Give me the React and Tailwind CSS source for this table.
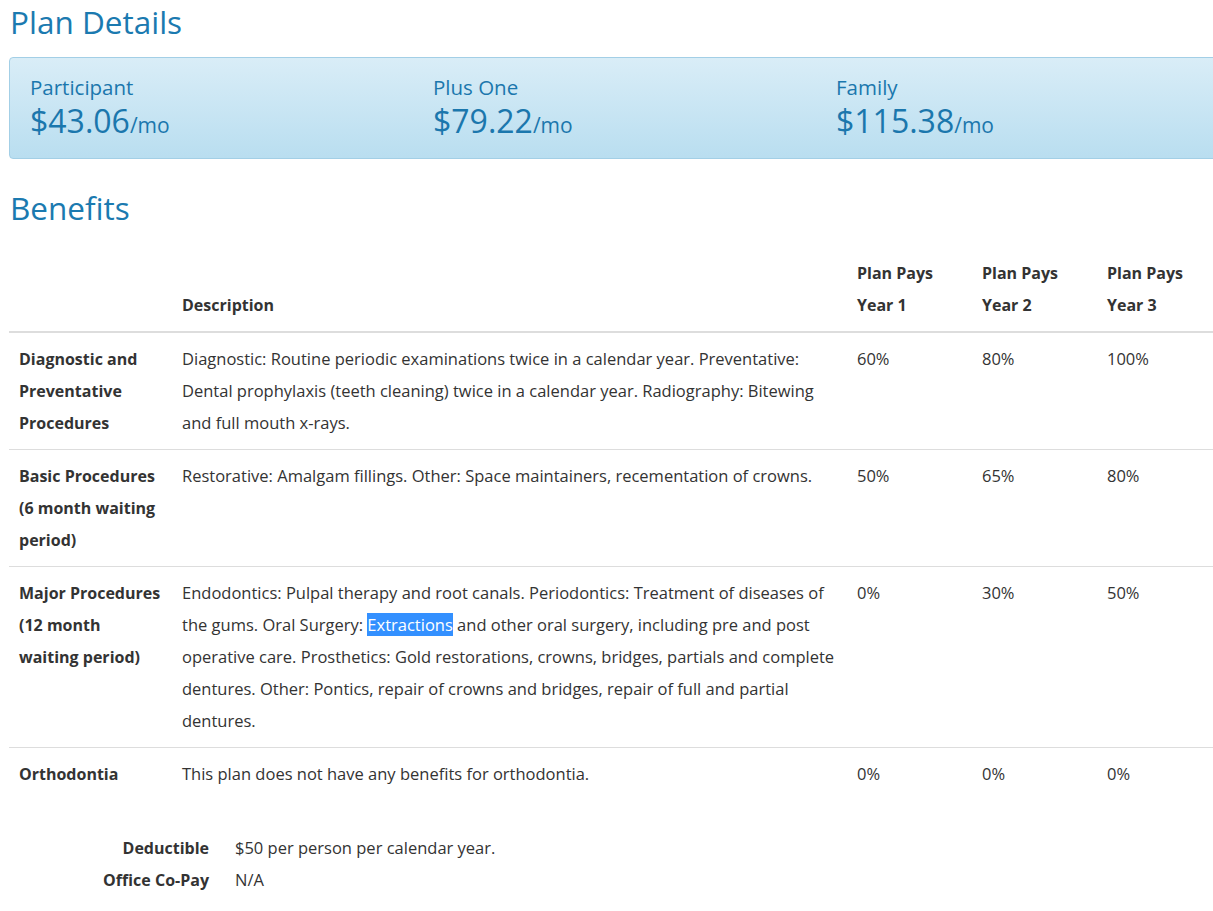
import React from 'react';

const rows = [
  {
    label: ['Diagnostic and', 'Preventative', 'Procedures'],
    desc: [
      'Diagnostic: Routine periodic examinations twice in a calendar year. Preventative:',
      'Dental prophylaxis (teeth cleaning) twice in a calendar year. Radiography: Bitewing',
      'and full mouth x-rays.',
    ],
    pays: ['60%', '80%', '100%'],
  },
  {
    label: ['Basic Procedures', '(6 month waiting', 'period)'],
    desc: ['Restorative: Amalgam fillings. Other: Space maintainers, recementation of crowns.'],
    pays: ['50%', '65%', '80%'],
  },
  {
    label: ['Major Procedures', '(12 month', 'waiting period)'],
    desc: [
      'Endodontics: Pulpal therapy and root canals. Periodontics: Treatment of diseases of',
      <>
        the gums. Oral Surgery: <span className="bg-[#3390ff] text-white">Extractions</span> and other oral surgery, including pre and post
      </>,
      'operative care. Prosthetics: Gold restorations, crowns, bridges, partials and complete',
      'dentures. Other: Pontics, repair of crowns and bridges, repair of full and partial',
      'dentures.',
    ],
    pays: ['0%', '30%', '50%'],
  },
  {
    label: ['Orthodontia'],
    desc: ['This plan does not have any benefits for orthodontia.'],
    pays: ['0%', '0%', '0%'],
  },
];

const prices = [
  { name: 'Participant', amount: '$43.06' },
  { name: 'Plus One', amount: '$79.22' },
  { name: 'Family', amount: '$115.38' },
];

function Lines({ items }) {
  return items.map((line, i) => (
    <div key={i} className="whitespace-nowrap">{line}</div>
  ));
}

export default function App() {
  return (
    <div className="w-full min-h-screen overflow-hidden bg-white text-[#333] text-[16.5px] font-['Open_Sans','Noto_Sans',sans-serif]">
      <div className="w-[1240px] pl-[9px]">
        <h1 className="mt-[5px] pl-[1px] text-[31.5px] leading-[33px] text-[#1b7ab0]">Plan Details</h1>

        <div className="mt-[19px] grid grid-cols-[403px_403px_1fr] rounded-[4px] border border-[#a3cfe6] bg-gradient-to-b from-[#d9edf7] to-[#b9def0] pt-[15px] pb-[17px] pl-[20px] text-[#1b77ad]">
          {prices.map((p) => (
            <div key={p.name}>
              <div className="text-[20.5px] leading-[28px]">{p.name}</div>
              <div className="text-[32px] leading-[40px]">
                <span>{p.amount}</span>
                <span className="text-[21px] leading-none">/mo</span>
              </div>
            </div>
          ))}
        </div>

        <h2 className="mt-[32px] pl-[1px] text-[31.5px] leading-[33px] text-[#1b7ab0]">Benefits</h2>

        <table className="mt-[23px] w-[1213px] table-fixed border-collapse leading-8">
          <colgroup>
            <col className="w-[163px]" />
            <col className="w-[675px]" />
            <col className="w-[125px]" />
            <col className="w-[125px]" />
            <col className="w-[125px]" />
          </colgroup>
          <thead>
            <tr className="border-b-2 border-[#ddd] align-bottom text-left text-[16px] font-bold">
              <th className="px-[10px] py-[10px]"></th>
              <th className="px-[10px] py-[10px]">Description</th>
              {[1, 2, 3].map((n) => (
                <th key={n} className="px-[10px] py-[10px]">
                  <div>Plan Pays</div>
                  <div>Year {n}</div>
                </th>
              ))}
            </tr>
          </thead>
          <tbody>
            {rows.map((r, i) => (
              <tr key={i} className={`align-top ${i > 0 ? 'border-t border-[#ddd]' : ''}`}>
                <td className="px-[10px] py-[10px] text-[16px] font-bold">
                  <Lines items={r.label} />
                </td>
                <td className="px-[10px] py-[10px]">
                  <Lines items={r.desc} />
                </td>
                {r.pays.map((v, j) => (
                  <td key={j} className="px-[10px] py-[10px]">{v}</td>
                ))}
              </tr>
            ))}
          </tbody>
        </table>

        <div className="mt-[32px] grid grid-cols-[200px_1fr] gap-x-[26px] leading-8">
          <div className="text-right text-[16px] font-bold">Deductible</div>
          <div>$50 per person per calendar year.</div>
          <div className="text-right text-[16px] font-bold">Office Co-Pay</div>
          <div>N/A</div>
        </div>
      </div>
    </div>
  );
}
